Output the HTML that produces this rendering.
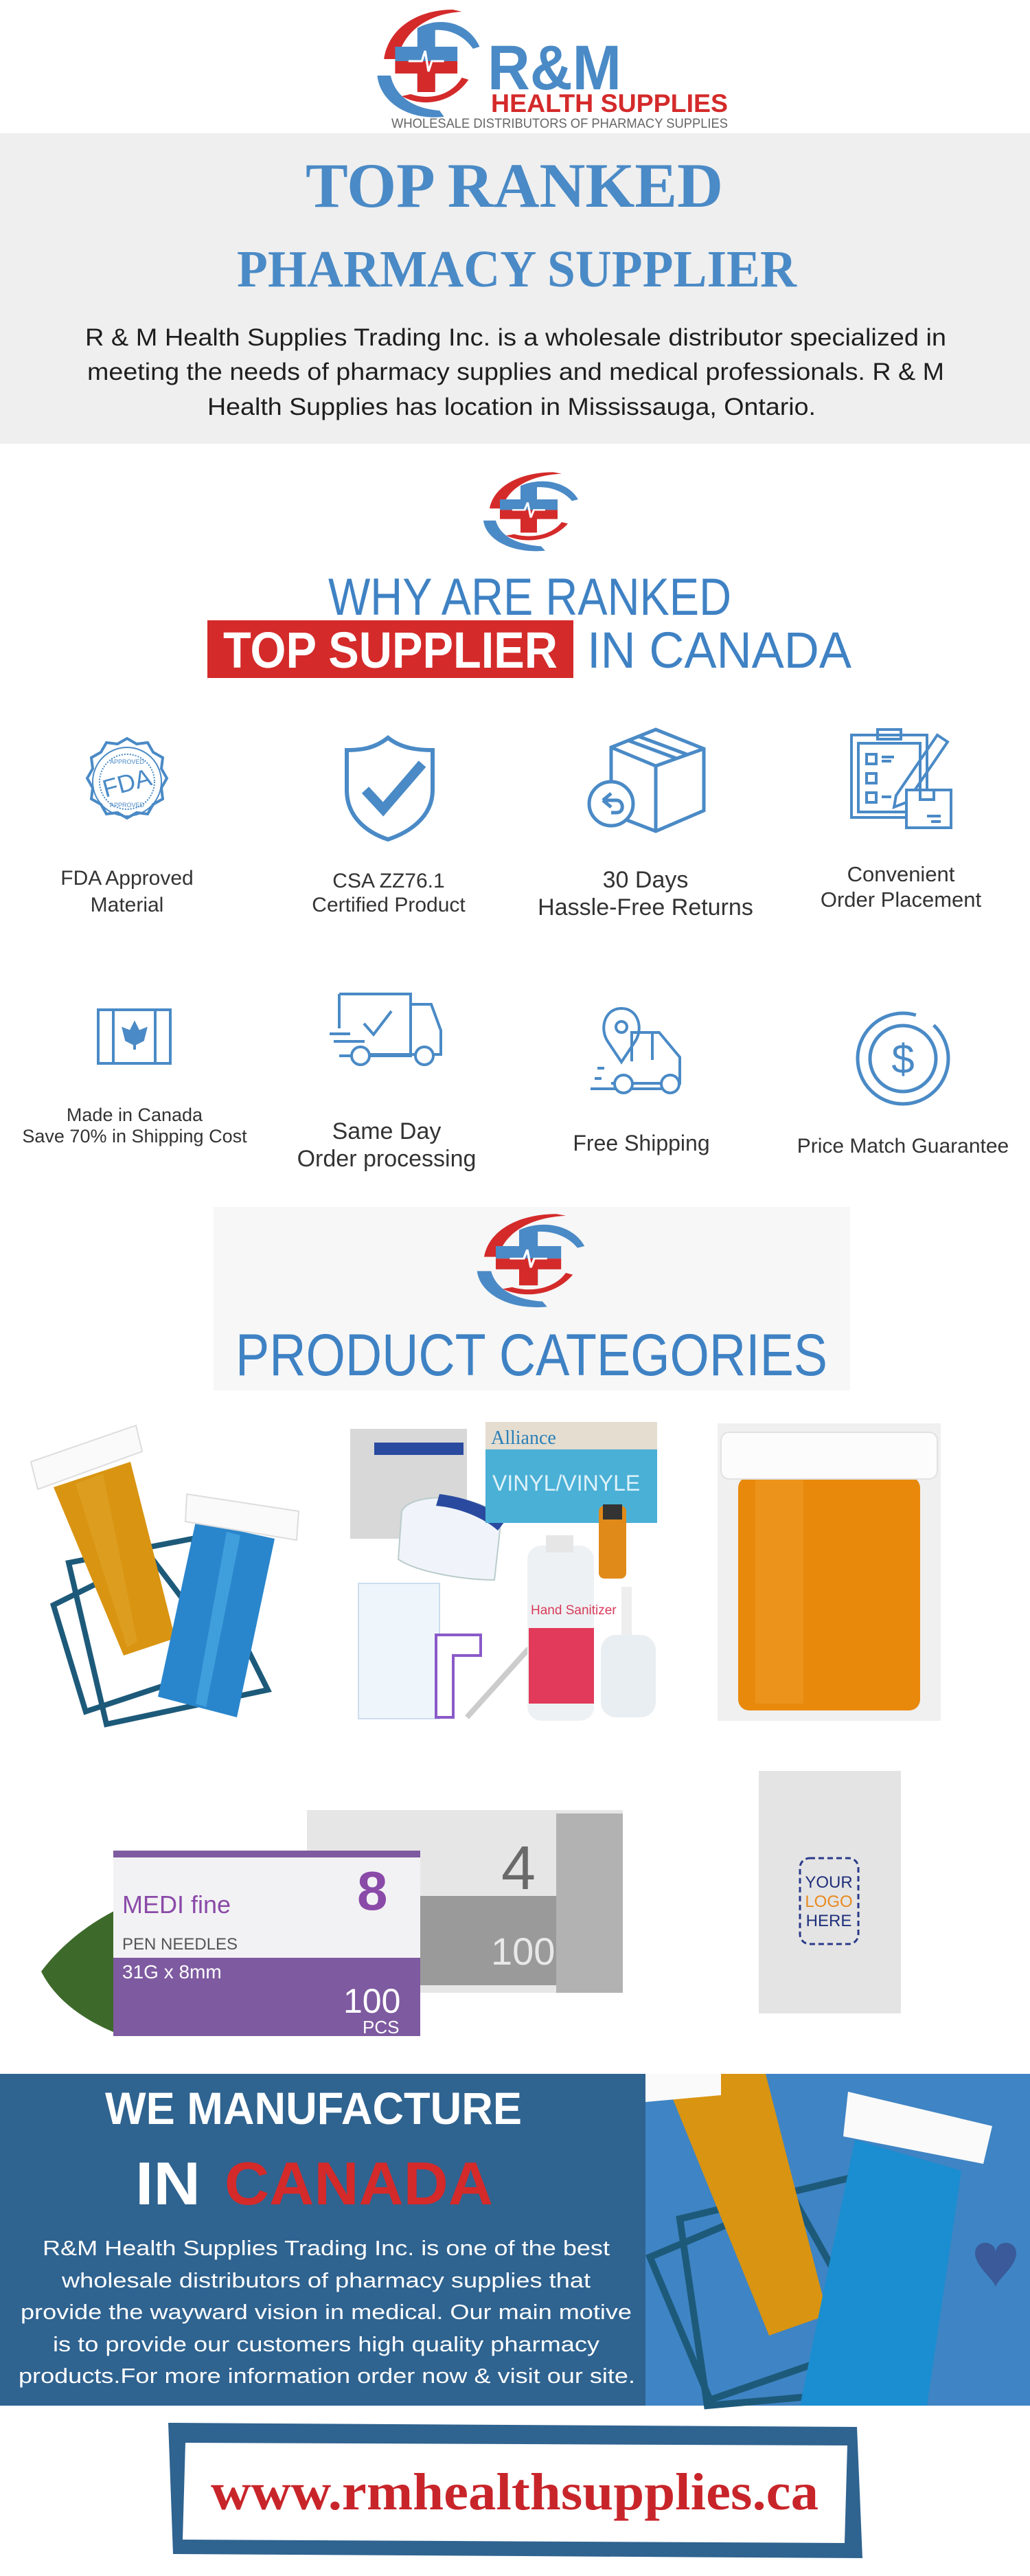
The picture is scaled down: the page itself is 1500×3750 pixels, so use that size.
<!DOCTYPE html>
<html><head><meta charset="utf-8"><style>
html,body{margin:0;padding:0;background:#fff;width:1500px;height:3750px;overflow:hidden}
svg{display:block}
.sans{font-family:"Liberation Sans Narrow","Liberation Sans",sans-serif}
.serif{font-family:"Liberation Serif",serif}
.lab{font-family:"Liberation Sans Narrow","Liberation Sans",sans-serif;fill:#333;text-anchor:middle}
</style></head><body>
<svg width="1500" height="3750" viewBox="0 0 1500 3750" xmlns="http://www.w3.org/2000/svg">
<defs>
<g id="mark">
 <path d="M10,52 C14,22 40,4 72,4 L80,6 C50,8 28,24 22,52 Z" fill="#d42a2a"/>
 <path d="M40,22 C60,10 86,16 96,40 L90,42 C80,26 62,20 46,26 Z" fill="#4a8ac6"/>
 <path d="M4,68 C6,92 30,112 64,108 L60,102 C36,100 20,88 16,68 Z" fill="#4a8ac6"/>
 <path d="M26,88 C46,100 72,94 86,72 L80,70 C70,88 50,92 34,86 Z" fill="#d42a2a"/>
 <rect x="40" y="22" width="16" height="60" fill="#4a8ac6"/>
 <rect x="20" y="40" width="56" height="14" fill="#4a8ac6"/>
 <rect x="20" y="54" width="56" height="12" fill="#d42a2a"/>
 <rect x="40" y="54" width="16" height="30" fill="#d42a2a"/>
 <path d="M32,54 L44,54 L47,44 L50,64 L53,54 L64,54" stroke="#fff" stroke-width="2" fill="none"/>
</g>
</defs>

<!-- Header logo -->
<g transform="translate(543,8) scale(1.62,1.5)"><use href="#mark"/></g>
<text x="710" y="130" class="sans" font-weight="bold" font-size="92" fill="#4a8ac6" textLength="195" lengthAdjust="spacingAndGlyphs">R&amp;M</text>
<text x="715" y="163" font-family="Liberation Sans,sans-serif" font-weight="bold" font-size="37" fill="#d42a2a" textLength="345" lengthAdjust="spacingAndGlyphs">HEALTH SUPPLIES</text>
<text x="570" y="186" font-family="Liberation Sans,sans-serif" font-size="19" fill="#666" textLength="490" lengthAdjust="spacingAndGlyphs">WHOLESALE DISTRIBUTORS OF PHARMACY SUPPLIES</text>

<!-- Gray band -->
<rect x="0" y="194" width="1500" height="452" fill="#efefef"/>
<text x="445" y="301" class="serif" font-weight="bold" font-size="92" fill="#4a8ac6" textLength="608" lengthAdjust="spacingAndGlyphs">TOP RANKED</text>
<text x="345" y="417" class="serif" font-weight="bold" font-size="76" fill="#4a8ac6" textLength="815" lengthAdjust="spacingAndGlyphs">PHARMACY SUPPLIER</text>
<g class="sans" font-size="35" fill="#1e1e1e">
<text x="124" y="503" textLength="1254" lengthAdjust="spacingAndGlyphs">R &amp; M Health Supplies Trading Inc. is a wholesale distributor specialized in</text>
<text x="127" y="553" textLength="1248" lengthAdjust="spacingAndGlyphs">meeting the needs of pharmacy supplies and medical professionals. R &amp; M</text>
<text x="302" y="604" textLength="886" lengthAdjust="spacingAndGlyphs">Health Supplies has location in Mississauga, Ontario.</text>
</g>

<!-- Why section -->
<g transform="translate(698,683) scale(1.5,1.1)"><use href="#mark"/></g>
<text x="478" y="895" class="sans" font-size="76" fill="#3f82c4" textLength="587" lengthAdjust="spacingAndGlyphs">WHY ARE RANKED</text>
<rect x="302" y="903" width="533" height="84" fill="#d42a2a"/>
<text x="325" y="972" class="sans" font-weight="bold" font-size="74" fill="#fff" textLength="487" lengthAdjust="spacingAndGlyphs">TOP SUPPLIER</text>
<text x="855" y="972" class="sans" font-size="74" fill="#3f82c4" textLength="385" lengthAdjust="spacingAndGlyphs">IN CANADA</text>

<!-- icons row 1 -->
<g stroke="#4a8ac6" fill="none" stroke-width="5">
 <path d="M185,1075 l14,8 16,-2 8,14 14,8 -2,16 8,14 -8,14 2,16 -14,8 -8,14 -16,-2 -14,8 -14,-8 -16,2 -8,-14 -14,-8 2,-16 -8,-14 8,-14 -2,-16 14,-8 8,-14 16,2 z" stroke-width="4"/>
 <circle cx="185" cy="1138" r="50" stroke-width="2"/>
 <circle cx="185" cy="1138" r="40" stroke-width="2" stroke-dasharray="2 2"/>
 <path d="M565,1074 C545,1090 525,1092 505,1092 L505,1150 C505,1190 535,1212 565,1222 C595,1212 630,1190 630,1150 L630,1092 C610,1092 585,1090 565,1074 Z" stroke-width="6"/>
 <path d="M532,1150 L558,1178 L615,1112" stroke-width="14"/>
 <path d="M890,1088 L955,1062 L1025,1090 L1025,1180 L955,1210 L890,1185 Z M890,1088 L955,1115 L1025,1090 M955,1115 L955,1210 M915,1078 L985,1104 M930,1072 L1000,1098"/>
 <circle cx="890" cy="1170" r="32" fill="#fff"/>
 <path d="M878,1165 l12,-10 m-12,10 l12,10 m-12,-10 h20 c10,0 12,18 0,18 h-8"/>
 <path d="M1240,1070 h110 v120 h-110 z M1250,1082 h90 v100 h-90 z M1278,1062 h34 v14 h-34 z" stroke-width="4"/>
 <path d="M1262,1098 h14 v14 h-14 z M1262,1126 h14 v14 h-14 z M1262,1154 h14 v14 h-14 z M1284,1102 h18 M1284,1108 h14 M1284,1160 h14" stroke-width="4"/>
 <path d="M1305,1158 L1365,1070 L1380,1080 L1320,1168 L1302,1175 Z" stroke-width="4"/>
 <rect x="1320" y="1150" width="65" height="55" fill="#fff" stroke-width="4"/>
 <path d="M1340,1150 v14 h20 v-14 M1350,1188 h20 M1356,1196 h14" stroke-width="4"/>
</g>
<text x="185" y="1152" font-family="Liberation Sans,sans-serif" font-size="36" fill="#4a8ac6" text-anchor="middle" transform="rotate(-15 185 1140)">FDA</text>
<text x="185" y="1112" font-family="Liberation Sans,sans-serif" font-size="9" fill="#4a8ac6" text-anchor="middle">APPROVED</text>
<text x="185" y="1175" font-family="Liberation Sans,sans-serif" font-size="9" fill="#4a8ac6" text-anchor="middle">APPROVED</text>
<text x="185" y="1288" class="lab" font-size="30">FDA Approved</text>
<text x="185" y="1327" class="lab" font-size="30">Material</text>
<text x="566" y="1292" class="lab" font-size="30">CSA ZZ76.1</text>
<text x="566" y="1327" class="lab" font-size="30">Certified Product</text>
<text x="940" y="1292" class="lab" font-size="34">30 Days</text>
<text x="940" y="1332" class="lab" font-size="34">Hassle-Free Returns</text>
<text x="1312" y="1283" class="lab" font-size="31">Convenient</text>
<text x="1312" y="1320" class="lab" font-size="31">Order Placement</text>

<!-- icons row 2 -->
<g stroke="#4a8ac6" fill="none" stroke-width="4">
 <rect x="143" y="1470" width="105" height="78"/>
 <path d="M165,1470 v78 M226,1470 v78"/>
 <path d="M196,1490 l6,12 10,-4 -4,16 -12,6 -12,-6 -4,-16 10,4 z" fill="#4a8ac6"/>
 <path d="M196,1516 v12"/>
 <path d="M494,1447 h104 v90 h-104 M494,1447 v50 M598,1462 h30 l14,38 v35 h-44 M480,1505 h30 M486,1516 h45 M530,1535 h70"/>
 <path d="M530,1490 l14,16 26,-34" stroke-width="4"/>
 <circle cx="525" cy="1537" r="13" fill="#fff"/><circle cx="618" cy="1537" r="13" fill="#fff"/>
 <path d="M905,1468 c-25,0 -32,30 -20,48 l20,30 20,-30 c12,-18 5,-48 -20,-48 z"/>
 <circle cx="905" cy="1495" r="8"/>
 <path d="M920,1545 v-42 h40 l30,36 v38 h-100 M950,1503 v40 M860,1585 h110 M870,1555 h10 M866,1570 h10"/>
 <circle cx="908" cy="1578" r="13" fill="#fff"/><circle cx="976" cy="1578" r="13" fill="#fff"/>
 <circle cx="1315" cy="1541" r="66" stroke-width="5" stroke-dasharray="330 30"/>
 <circle cx="1315" cy="1541" r="48" stroke-width="5"/>
 <text x="1315" y="1562" font-family="Liberation Sans,sans-serif" font-size="60" fill="#4a8ac6" stroke="none" text-anchor="middle">$</text>
</g>
<text x="196" y="1632" class="lab" font-size="27">Made in Canada</text>
<text x="196" y="1663" class="lab" font-size="27">Save 70% in Shipping Cost</text>
<text x="563" y="1658" class="lab" font-size="34">Same Day</text>
<text x="563" y="1698" class="lab" font-size="34">Order processing</text>
<text x="934" y="1675" class="lab" font-size="32">Free Shipping</text>
<text x="1315" y="1678" class="lab" font-size="30">Price Match Guarantee</text>

<!-- Product categories -->
<rect x="311" y="1757" width="927" height="267" fill="#f7f7f7"/>
<g transform="translate(688,1762) scale(1.7,1.3)"><use href="#mark"/></g>
<text x="343" y="2002" font-family="Liberation Sans,sans-serif" font-size="86" fill="#3f82c4" textLength="862" lengthAdjust="spacingAndGlyphs">PRODUCT CATEGORIES</text>

<!-- Product 1: vials -->
<g>
 <polygon points="100,2275 280,2240 390,2460 155,2510" fill="none" stroke="#1d5a7a" stroke-width="8"/>
 <polygon points="85,2320 235,2270 330,2440 110,2480" fill="none" stroke="#1d5a7a" stroke-width="8" transform="rotate(-8 200 2380)"/>
 <polygon points="78,2165 190,2128 255,2385 180,2410" fill="#d99412"/>
 <polygon points="110,2160 150,2145 200,2390 185,2398" fill="#e0a52a" opacity="0.6"/>
 <polygon points="45,2128 198,2075 207,2113 55,2168" fill="#fafafa" stroke="#ddd" stroke-width="2"/>
 <polygon points="285,2215 400,2240 345,2500 230,2470" fill="#2a86cc"/>
 <polygon points="330,2230 350,2235 300,2485 285,2480" fill="#4fb0e6" opacity="0.6"/>
 <polygon points="272,2175 435,2200 432,2242 270,2215" fill="#fafafa" stroke="#ddd" stroke-width="2"/>
</g>

<!-- Product 2: PPE collage -->
<g>
 <rect x="510" y="2080" width="170" height="160" fill="#d8d8d8"/>
 <rect x="545" y="2100" width="130" height="18" fill="#2a4aa0"/>
 <path d="M585,2200 C600,2170 700,2175 730,2210 L720,2300 C680,2300 610,2290 580,2270 Z" fill="#f0f4fa" stroke="#bcc" stroke-width="2"/>
 <path d="M640,2175 C680,2180 720,2195 735,2215 L725,2228 C705,2210 670,2195 635,2192 Z" fill="#2a4aa0"/>
 <rect x="707" y="2070" width="250" height="147" fill="#4ab0d6"/>
 <rect x="707" y="2070" width="250" height="40" fill="#e4ddd0"/>
 <text x="715" y="2102" class="serif" font-size="28" fill="#2a7fb8">Alliance</text>
 <text x="717" y="2170" class="sans" font-size="32" fill="#dff2fa">VINYL/VINYLE</text>
 <rect x="872" y="2192" width="40" height="106" rx="8" fill="#e08a1a"/>
 <rect x="878" y="2190" width="28" height="22" fill="#333"/>
 <rect x="522" y="2305" width="118" height="197" fill="#eef6fb" stroke="#cde" stroke-width="2"/>
 <path d="M635,2380 h65 v30 h-40 v90 h-25 z" fill="#fff" stroke="#8a5ac8" stroke-width="4"/>
 <path d="M680,2500 L770,2400" stroke="#ccc" stroke-width="8"/>
 <rect x="768" y="2250" width="97" height="255" rx="20" fill="#eef1f3"/>
 <rect x="795" y="2235" width="40" height="25" fill="#e6e6e6"/>
 <rect x="770" y="2370" width="95" height="110" fill="#e23a5a"/>
 <text x="773" y="2350" class="sans" font-size="19" fill="#d83a5a">Hand Sanitizer</text>
 <rect x="875" y="2380" width="80" height="120" rx="22" fill="#e9eef2"/>
 <rect x="905" y="2310" width="15" height="70" fill="#eee"/>
</g>

<!-- Product 3: amber vial -->
<rect x="1045" y="2072" width="325" height="433" fill="#f0f0f0"/>
<rect x="1075" y="2150" width="265" height="340" rx="16" fill="#e8890c"/>
<rect x="1100" y="2150" width="70" height="330" fill="#ee9a26" opacity="0.6"/>
<rect x="1050" y="2085" width="315" height="68" rx="12" fill="#fcfcfc" stroke="#e2e2e2" stroke-width="2"/>

<!-- Row 2 products -->
<rect x="447" y="2635" width="460" height="266" fill="#e6e6e6"/>
<rect x="612" y="2760" width="295" height="130" fill="#9a9a9a"/>
<rect x="810" y="2640" width="97" height="261" fill="#b2b2b2"/>
<text x="730" y="2750" class="sans" font-size="90" fill="#6a6a6a">4</text>
<text x="715" y="2860" class="sans" font-size="56" fill="#e8e8e8">100</text>
<path d="M60,2870 C90,2830 130,2800 170,2780 L170,2960 C120,2940 80,2910 60,2870 Z" fill="#3d6a2a"/>
<rect x="165" y="2694" width="447" height="270" fill="#f2f2f4"/>
<rect x="165" y="2694" width="447" height="10" fill="#7e5aa0"/>
<rect x="165" y="2850" width="447" height="114" fill="#7e5aa0"/>
<text x="178" y="2785" class="sans" font-size="36" fill="#8a4aa8">MEDI fine</text>
<text x="520" y="2780" font-family="Liberation Sans,sans-serif" font-weight="bold" font-size="80" fill="#8a4aa8">8</text>
<text x="178" y="2838" class="sans" font-size="24" fill="#555">PEN NEEDLES</text>
<text x="178" y="2880" class="sans" font-size="28" fill="#fff">31G x 8mm</text>
<text x="500" y="2930" class="sans" font-size="50" fill="#fff">100</text>
<text x="528" y="2960" class="sans" font-size="26" fill="#fff">PCS</text>
<rect x="1105" y="2578" width="207" height="353" fill="#e4e4e4"/>
<rect x="1165" y="2705" width="85" height="125" rx="14" fill="none" stroke="#2a3a8a" stroke-width="3" stroke-dasharray="8 5"/>
<text x="1207" y="2748" class="sans" font-size="24" fill="#1f2f7a" text-anchor="middle">YOUR</text>
<text x="1207" y="2776" class="sans" font-size="24" fill="#e88a20" text-anchor="middle">LOGO</text>
<text x="1207" y="2804" class="sans" font-size="24" fill="#1f2f7a" text-anchor="middle">HERE</text>

<!-- Blue section -->
<rect x="0" y="3019" width="1500" height="483" fill="#3f84c4"/>
<rect x="0" y="3019" width="940" height="483" fill="#2f6390"/>
<g>
 <polygon points="990,3230 1240,3170 1280,3480 1030,3502" fill="none" stroke="#1d5a7a" stroke-width="10"/>
 <polygon points="960,3260 1180,3210 1260,3440 1010,3480" fill="none" stroke="#1d5a7a" stroke-width="10" transform="rotate(-10 1100 3350)"/>
 <polygon points="965,3019 1115,3019 1205,3370 1120,3400" fill="#d99412"/>
 <polygon points="940,3019 1050,3019 1050,3050 940,3060" fill="#fafafa"/>
 <polygon points="1245,3115 1400,3160 1350,3502 1165,3502" fill="#1a8ed0"/>
 <polygon points="1235,3045 1445,3095 1432,3150 1228,3110" fill="#fafafa"/>
 <path d="M1420,3280 c0,-20 30,-20 30,0 c0,-20 30,-20 30,0 c0,20 -30,40 -30,50 c0,-10 -30,-30 -30,-50 z" fill="#3a5a9a"/>
</g>
<text x="153" y="3092" class="sans" font-weight="bold" font-size="66" fill="#fff" textLength="607" lengthAdjust="spacingAndGlyphs">WE MANUFACTURE</text>
<text x="197" y="3209" class="sans" font-weight="bold" font-size="88" fill="#fff" textLength="95" lengthAdjust="spacingAndGlyphs">IN</text>
<text x="327" y="3209" class="sans" font-weight="bold" font-size="88" fill="#d42a2a" textLength="391" lengthAdjust="spacingAndGlyphs">CANADA</text>
<g class="sans" font-size="31" fill="#fff">
<text x="62" y="3283" textLength="826" lengthAdjust="spacingAndGlyphs">R&amp;M Health Supplies Trading Inc. is one of the best</text>
<text x="90" y="3330" textLength="770" lengthAdjust="spacingAndGlyphs">wholesale distributors of pharmacy supplies that</text>
<text x="30" y="3376" textLength="890" lengthAdjust="spacingAndGlyphs">provide the wayward vision in medical. Our main motive</text>
<text x="77" y="3423" textLength="796" lengthAdjust="spacingAndGlyphs">is to provide our customers high quality pharmacy</text>
<text x="27" y="3469" textLength="898" lengthAdjust="spacingAndGlyphs">products.For more information order now &amp; visit our site.</text>
</g>

<!-- URL frame -->
<polygon points="245,3527 1248,3533 1256,3724 252,3718" fill="#2f6390"/>
<polygon points="270,3556 1234,3560 1230,3702 266,3697" fill="#fff"/>
<text x="307" y="3653" class="serif" font-weight="bold" font-size="76" fill="#c8252a" textLength="885" lengthAdjust="spacingAndGlyphs">www.rmhealthsupplies.ca</text>
</svg>
</body></html>
